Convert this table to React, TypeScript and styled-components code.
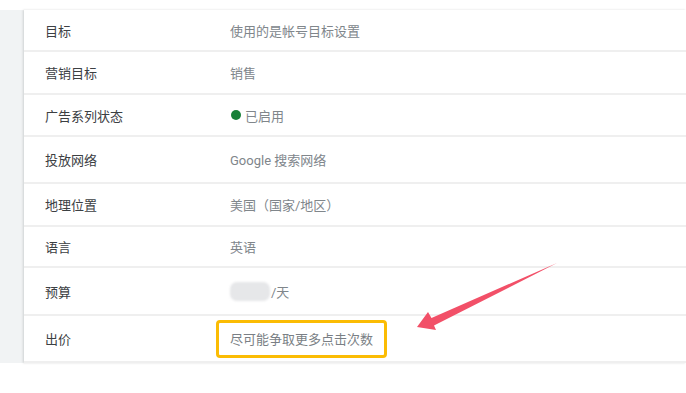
import React from "react";
import styled, { createGlobalStyle } from "styled-components";

const Global = createGlobalStyle`
  html, body { margin: 0; padding: 0; background: #ffffff; }
  body { font-family: Roboto, "Noto Sans CJK SC", "Noto Sans", sans-serif; }
`;

const Page = styled.div`
  position: relative;
  width: 686px;
  height: 393px;
  overflow: hidden;
  background: #ffffff;
  padding-top: 10px;
  box-sizing: border-box;
`;

const Frame = styled.div`
  display: flex;
  background: #f1f3f4;
`;

const Sidebar = styled.div`
  width: 24px;
  flex: none;
`;

const Card = styled.div`
  flex: 1;
  background: #ffffff;
  box-shadow: -1px 0 2px rgba(60, 64, 67, 0.18);
`;

const Row = styled.div<{ $h: number }>`
  display: flex;
  align-items: center;
  height: ${(p) => p.$h}px;
  box-sizing: border-box;
  border-bottom: 2px solid #efefef;
  padding-left: 21px;
`;

const Label = styled.div`
  width: 185px;
  flex: none;
  font-size: 13px;
  color: #3c4043;
`;

const Value = styled.div<{ $highlight?: boolean }>`
  display: flex;
  align-items: center;
  font-size: 13px;
  color: #80868b;
  ${(p) =>
    p.$highlight
      ? `
    margin-left: -14px;
    height: 38px;
    box-sizing: border-box;
    padding: 0 11px;
    border: 3px solid #fbbc04;
    border-radius: 4px;
    color: #7a7f85;
  `
      : ""}
`;

const Dot = styled.span`
  width: 10px;
  height: 10px;
  border-radius: 50%;
  background: #188038;
  margin: 0 4px 0 1px;
`;

const Blur = styled.span`
  width: 40px;
  height: 19px;
  border-radius: 7px;
  background: #e6e7e9;
  filter: blur(1px);
  margin-right: 1px;
`;

const Arrow = styled.svg`
  position: absolute;
  left: 0;
  top: 0;
  pointer-events: none;
`;

const rows: { label: string; h: number; value: React.ReactNode; highlight?: boolean }[] = [
  { label: "目标", h: 42, value: "使用的是帐号目标设置" },
  { label: "营销目标", h: 43, value: "销售" },
  {
    label: "广告系列状态",
    h: 42,
    value: (
      <>
        <Dot />
        已启用
      </>
    ),
  },
  { label: "投放网络", h: 47, value: "Google 搜索网络" },
  { label: "地理位置", h: 43, value: "美国（国家/地区）" },
  { label: "语言", h: 41, value: "英语" },
  {
    label: "预算",
    h: 48,
    value: (
      <>
        <Blur />
        /天
      </>
    ),
  },
  { label: "出价", h: 47, value: "尽可能争取更多点击次数", highlight: true },
];

export default function App() {
  return (
    <Page>
      <Global />
      <Frame>
        <Sidebar />
        <Card>
          {rows.map((r) => (
            <Row key={r.label} $h={r.h}>
              <Label>{r.label}</Label>
              <Value $highlight={r.highlight}>{r.value}</Value>
            </Row>
          ))}
        </Card>
      </Frame>
      <Arrow width="686" height="393" viewBox="0 0 686 393">
        <polygon
          points="557,263 434,325.5 436,330 417,327 428,312 431.5,318"
          fill="#f25068"
        />
      </Arrow>
    </Page>
  );
}
